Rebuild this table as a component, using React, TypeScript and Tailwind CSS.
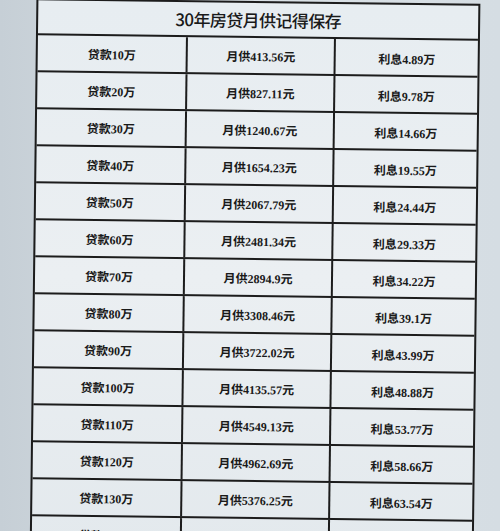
import React from "react";

const rows: [string, string, string][] = [
  ["10", "413.56", "4.89"],
  ["20", "827.11", "9.78"],
  ["30", "1240.67", "14.66"],
  ["40", "1654.23", "19.55"],
  ["50", "2067.79", "24.44"],
  ["60", "2481.34", "29.33"],
  ["70", "2894.9", "34.22"],
  ["80", "3308.46", "39.1"],
  ["90", "3722.02", "43.99"],
  ["100", "4135.57", "48.88"],
  ["110", "4549.13", "53.77"],
  ["120", "4962.69", "58.66"],
  ["130", "5376.25", "63.54"],
  ["140", "5789.8", "68.43"],
];

const cellFont = {
  fontFamily: "'Liberation Serif', 'Noto Sans CJK SC', serif",
};

export default function App() {
  return (
    <div className="h-[531px] w-[500px] overflow-hidden bg-gradient-to-r from-[#c6cfd6] via-[#dae1e6] to-[#d5dde3]">
      <div className="pl-[33px] pt-[1px]">
        <div className="w-[444px] rotate-[0.7deg] border-2 border-[#1c1c1c] bg-gradient-to-b from-[#e7edf1] via-[#ebeff2] to-[#e3e9ed]">
          <div
            className="flex h-[35px] items-center justify-center border-b-2 border-[#1c1c1c] text-[17px] font-medium tracking-[-0.6px] text-[#1a1a1a]"
            style={{ fontFamily: "'Noto Sans CJK SC', sans-serif" }}
          >
            30年房贷月供记得保存
          </div>
          {rows.map(([a, b, c], i) => (
            <div
              key={i}
              className="grid h-[37px] grid-cols-[148px_148px_1fr] border-b-2 border-[#1c1c1c] text-[12px] font-bold text-[#1a1a1a]"
              style={cellFont}
            >
              <div className="flex items-center justify-center pt-[2px]">
                贷款{a}万
              </div>
              <div className="flex items-center justify-center border-l-2 border-[#1c1c1c] pt-[2px]">
                月供{b}元
              </div>
              <div className="flex items-center justify-center border-l-2 border-[#1c1c1c] pt-[4px]">
                利息{c}万
              </div>
            </div>
          ))}
        </div>
      </div>
    </div>
  );
}
